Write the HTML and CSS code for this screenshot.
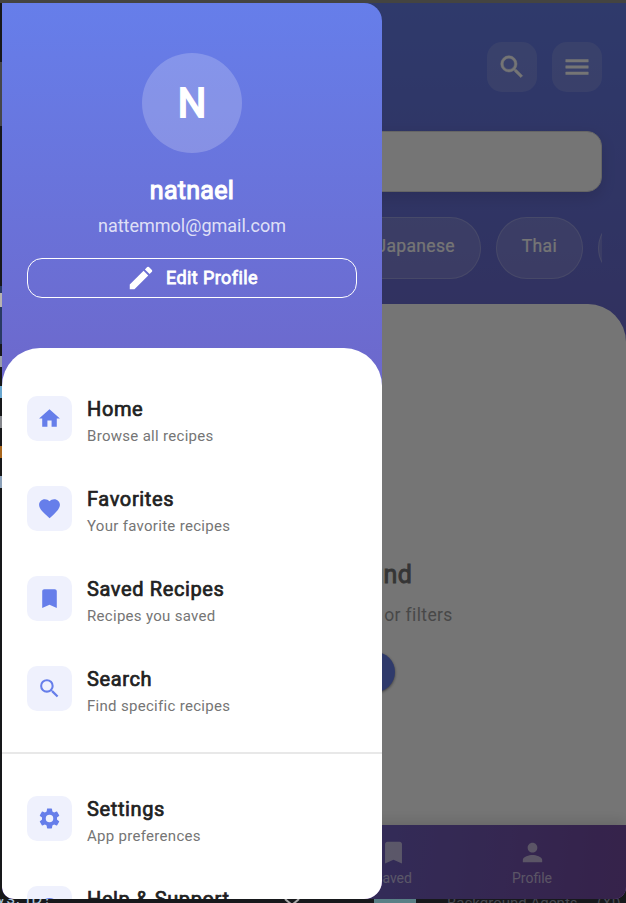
FILE: index.html
```html
<!DOCTYPE html>
<html lang="en">
<head>
<meta charset="utf-8">
<title>Recipes</title>
<link rel="stylesheet" href="styles.css">
</head>
<body>
<div class="desktop">
  <div class="editor-edge" aria-hidden="true">
    <i class="mark m1"></i><i class="mark m2"></i><i class="mark m3"></i><i class="mark m4"></i><i class="mark m5"></i><i class="mark m6"></i><i class="mark m7"></i><i class="mark m8"></i>
  </div>
  <div class="editor-foot">
    <span class="foot-text foot-left">vs, ID?</span>
    <svg class="foot-chevron" viewBox="0 0 16 8"><path d="M1 0l7 6 7-6"/></svg>
    <span class="foot-tile"></span>
    <span class="foot-text foot-mid">Background Agents</span>
    <span class="foot-text foot-end">(XI)</span>
  </div>

  <div class="window">
    <main class="app">
      <header class="app-header">
        <div class="actions">
          <button class="action" aria-label="Search"><svg viewBox="0 0 24 24"><path d="M15.5 14h-.79l-.28-.27A6.47 6.47 0 0 0 16 9.5 6.5 6.5 0 1 0 9.5 16c1.61 0 3.09-.59 4.23-1.57l.27.28v.79l5 4.99L20.49 19l-4.99-5zm-6 0C7.01 14 5 11.99 5 9.5S7.01 5 9.5 5 14 7.01 14 9.5 11.99 14 9.5 14z"/></svg></button>
          <button class="action" aria-label="Menu"><svg viewBox="0 0 24 24"><path d="M3 18h18v-2H3v2zm0-5h18v-2H3v2zm0-7v2h18V6H3z"/></svg></button>
        </div>
        <div class="searchbar"></div>
        <div class="chips">
          <span class="chip">Japanese</span>
          <span class="chip">Thai</span>
          <span class="chip chip-cut"></span>
        </div>
      </header>
      <section class="sheet">
        <div class="empty">
          <h2>No recipes found</h2>
          <p>Try adjusting your search or filters</p>
          <span class="empty-button"></span>
        </div>
      </section>
      <nav class="tabs">
        <span class="tab"></span>
        <span class="tab"></span>
        <span class="tab"><svg viewBox="0 0 24 24"><path d="M17 3H7c-1.1 0-1.99.9-1.99 2L5 21l7-3 7 3V5c0-1.1-.9-2-2-2z"/></svg>Saved</span>
        <span class="tab"><svg viewBox="0 0 24 24"><path d="M12 12c2.21 0 4-1.79 4-4s-1.79-4-4-4-4 1.79-4 4 1.79 4 4 4zm0 2c-2.67 0-8 1.34-8 4v2h16v-2c0-2.66-5.33-4-8-4z"/></svg>Profile</span>
      </nav>
    </main>
    <div class="scrim"></div>

    <aside class="drawer">
      <div class="profile">
        <div class="avatar">N</div>
        <div class="name">natnael</div>
        <div class="email">nattemmol@gmail.com</div>
        <button class="edit"><svg viewBox="0 0 24 24"><path d="M3 17.25V21h3.75L17.81 9.94l-3.75-3.75L3 17.25zM20.71 7.04a1 1 0 0 0 0-1.41l-2.34-2.34a1 1 0 0 0-1.41 0l-1.83 1.83 3.75 3.75 1.83-1.83z"/></svg><span>Edit Profile</span></button>
      </div>
      <div class="menu">
        <div class="item">
          <span class="icon"><svg viewBox="0 0 24 24"><path d="M10 20v-6h4v6h5v-8h3L12 3 2 12h3v8z"/></svg></span>
          <div><div class="title">Home</div><div class="sub">Browse all recipes</div></div>
        </div>
        <div class="item">
          <span class="icon"><svg viewBox="0 0 24 24"><path d="M12 21.35l-1.45-1.32C5.4 15.36 2 12.28 2 8.5 2 5.42 4.42 3 7.5 3c1.74 0 3.41.81 4.5 2.09C13.09 3.81 14.76 3 16.5 3 19.58 3 22 5.42 22 8.5c0 3.78-3.4 6.86-8.55 11.54L12 21.35z"/></svg></span>
          <div><div class="title">Favorites</div><div class="sub">Your favorite recipes</div></div>
        </div>
        <div class="item">
          <span class="icon"><svg viewBox="0 0 24 24"><path d="M17 3H7c-1.1 0-1.99.9-1.99 2L5 21l7-3 7 3V5c0-1.1-.9-2-2-2z"/></svg></span>
          <div><div class="title">Saved Recipes</div><div class="sub">Recipes you saved</div></div>
        </div>
        <div class="item">
          <span class="icon"><svg viewBox="0 0 24 24"><path d="M15.5 14h-.79l-.28-.27A6.47 6.47 0 0 0 16 9.5 6.5 6.5 0 1 0 9.5 16c1.61 0 3.09-.59 4.23-1.57l.27.28v.79l5 4.99L20.49 19l-4.99-5zm-6 0C7.01 14 5 11.99 5 9.5S7.01 5 9.5 5 14 7.01 14 9.5 11.99 14 9.5 14z"/></svg></span>
          <div><div class="title">Search</div><div class="sub">Find specific recipes</div></div>
        </div>
        <hr class="divider">
        <div class="item">
          <span class="icon"><svg viewBox="0 0 24 24"><path d="M19.14 12.94c.04-.3.06-.61.06-.94 0-.32-.02-.64-.07-.94l2.03-1.58a.49.49 0 0 0 .12-.61l-1.92-3.32a.488.488 0 0 0-.59-.22l-2.39.96c-.5-.38-1.03-.7-1.62-.94l-.36-2.54a.484.484 0 0 0-.48-.41h-3.84c-.24 0-.43.17-.47.41l-.36 2.54c-.59.24-1.13.57-1.62.94l-2.39-.96c-.22-.08-.47 0-.59.22L2.74 8.87c-.12.21-.08.47.12.61l2.03 1.58c-.05.3-.09.63-.09.94s.02.64.07.94l-2.03 1.58a.49.49 0 0 0-.12.61l1.92 3.32c.12.22.37.29.59.22l2.39-.96c.5.38 1.03.7 1.62.94l.36 2.54c.05.24.24.41.48.41h3.84c.24 0 .44-.17.47-.41l.36-2.54c.59-.24 1.13-.56 1.62-.94l2.39.96c.22.08.47 0 .59-.22l1.92-3.32c.12-.22.07-.47-.12-.61l-2.01-1.58zM12 15.6A3.6 3.6 0 1 1 12 8.4a3.6 3.6 0 0 1 0 7.2z"/></svg></span>
          <div><div class="title">Settings</div><div class="sub">App preferences</div></div>
        </div>
        <div class="item">
          <span class="icon"><svg viewBox="0 0 24 24"><path d="M12 2a10 10 0 1 0 0 20 10 10 0 0 0 0-20zm1 17h-2v-2h2v2zm2.07-7.75l-.9.92C13.45 12.9 13 13.5 13 15h-2v-.5c0-1.1.45-2.1 1.17-2.83l1.24-1.26A2 2 0 1 0 10 9H8a4 4 0 1 1 7.07 2.25z"/></svg></span>
          <div><div class="title">Help &amp; Support</div></div>
        </div>
      </div>
    </aside>
  </div>
</div>
</body>
</html>
```

FILE: styles.css
```css
* { box-sizing: border-box; }
body { margin: 0; font-family: Roboto, sans-serif; }
button { font: inherit; color: inherit; border: 0; padding: 0; }
svg { display: block; fill: currentColor; }

.desktop { position: relative; width: 626px; height: 903px; overflow: hidden; background: #17181a; padding: 3px 0 0 2px; box-shadow: inset 0 3px #444441; }
.window { position: relative; width: 624px; height: 896px; border-radius: 0 0 12px 12px; overflow: hidden; }

/* Editor visible around the window */
.editor-edge { position: absolute; left: 0; top: 0; width: 2px; height: 903px; overflow: hidden; }
.mark { position: absolute; left: 0; width: 2px; height: 14px; }
.m1 { top: 62px; height: 64px; background: #454649; }
.m2 { top: 286px; height: 58px; background: #293a63; }
.m3 { top: 293px; background: #b9b4b0; }
.m4 { top: 356px; height: 11px; background: #9b9fa8; }
.m5 { top: 386px; height: 12px; background: #69a6cf; }
.m6 { top: 416px; height: 12px; background: #85878c; }
.m7 { top: 446px; height: 12px; background: #a8661d; }
.m8 { top: 476px; height: 12px; background: #8ba0b8; }
.editor-foot { position: absolute; left: 0; top: 899px; width: 626px; height: 4px; overflow: hidden; background: #17191c; }
.foot-text { position: absolute; font-size: 17px; line-height: 20px; white-space: nowrap; }
.foot-left { left: -3px; top: -11px; color: #a8c4dc; letter-spacing: 1px; }
.foot-chevron { position: absolute; left: 284px; top: 0; width: 16px; height: 8px; fill: none; stroke: #a9a9a9; stroke-width: 2; }
.foot-tile { position: absolute; left: 374px; top: 0; width: 42px; height: 4px; background: #598086; }
.foot-mid { left: 447px; top: -6px; font-size: 15px; color: #454951; }
.foot-end { left: 597px; top: -6px; font-size: 15px; color: #454951; }

/* App behind the drawer */
.app { height: 100%; display: flex; flex-direction: column; background: linear-gradient(#667eea, #764ba2); }
.app-header { height: 301px; padding: 39px 24px 0; }
.actions { display: flex; justify-content: flex-end; gap: 15px; color: #fff; }
.action { width: 50px; height: 50px; display: grid; place-items: center; border-radius: 15px; background: rgba(255,255,255,.15); }
.action svg { width: 30px; height: 30px; stroke: currentColor; stroke-width: .4; }
.searchbar { height: 61px; margin-top: 39px; border-radius: 15px; background: #fff; border: 1px solid #dcdcdc; box-shadow: 0 5px 15px rgba(0,0,0,.12); }
.chips { display: flex; justify-content: flex-end; gap: 15px; margin-top: 25px; overflow: hidden; }
.chip { flex: none; height: 62px; padding: 0 25px; border: 1px solid rgba(255,255,255,.22); border-radius: 31px; background: rgba(255,255,255,.15); color: #fff; font-size: 17.5px; letter-spacing: .32px; -webkit-text-stroke: .2px; line-height: 57px; }
.chip-cut { width: 90px; margin-right: -86px; }
.sheet { flex: 1; border-radius: 38px 38px 0 0; background: #fff; padding-top: 253px; }
.empty { display: flex; flex-direction: column; align-items: center; white-space: nowrap; }
.empty h2 { margin: 0; font-size: 25px; line-height: 36px; font-weight: 400; letter-spacing: .4px; -webkit-text-stroke: .9px; color: #757575; }
.empty p { margin: 10px 0 0; font-size: 17.5px; line-height: 24px; letter-spacing: .37px; color: #9e9e9e; }
.empty-button { width: 162px; height: 40px; margin-top: 25px; border-radius: 20px; background: #667eea; box-shadow: 0 1px 3px rgba(0,0,0,.5); }
.tabs { height: 74px; padding: 13px 34px 0 43.5px; display: grid; grid-template-columns: repeat(4, 139px); background: linear-gradient(96.8deg, #667eea, #764ba2); box-shadow: 0 -4px 12px rgba(0,0,0,.12); }
.tab { display: flex; flex-direction: column; align-items: center; gap: 1px; font-size: 14px; line-height: 20px; color: rgba(255,255,255,.6); }
.tab svg { width: 29px; height: 29px; }
.scrim { position: absolute; inset: 0; background: rgba(0,0,0,.54); }

/* Drawer */
.drawer { position: absolute; left: 0; top: 0; width: 380px; height: 896px; overflow: hidden; border-radius: 0 18px 18px 12px; background: linear-gradient(#667eea, #764ba2); }
.profile { height: 345px; padding: 50px 25px 0; display: flex; flex-direction: column; align-items: center; color: #fff; }
.avatar { width: 100px; height: 100px; border-radius: 50%; background: rgba(255,255,255,.2); display: grid; place-items: center; font-size: 40px; -webkit-text-stroke: 1.9px; }
.name { margin-top: 21px; font-size: 25px; line-height: 34px; letter-spacing: .3px; -webkit-text-stroke: 1.1px; }
.email { margin-top: 5px; font-size: 18px; line-height: 26px; color: rgba(255,255,255,.8); }
.edit { width: 330px; height: 40px; margin-top: 19px; display: flex; align-items: center; justify-content: center; gap: 10px; border: 1.25px solid #fff; border-radius: 15px; background: none; font-size: 18px; letter-spacing: .42px; -webkit-text-stroke: .8px; }
.edit span { line-height: 22px; margin-top: -1px; }
.edit svg { width: 30px; height: 30px; }
.menu { height: 551px; overflow: hidden; padding-top: 25px; background: #fff; border-radius: 38px 38px 0 0; }
.item { height: 90px; padding: 0 25px; display: flex; align-items: center; gap: 15px; }
.item > div { height: 46px; }
.icon { width: 45px; height: 45px; display: grid; place-items: center; border-radius: 10px; background: #eff1fd; color: #667eea; }
.icon svg { width: 25px; height: 25px; }
.title { font-size: 20px; line-height: 28px; letter-spacing: .62px; -webkit-text-stroke: .7px; color: #212121; }
.sub { margin-top: 3px; font-size: 15px; line-height: 20px; letter-spacing: .3px; color: #757575; }
.divider { height: 2px; margin: 19px 0; border: 0; background: #e8e8e8; }
```
